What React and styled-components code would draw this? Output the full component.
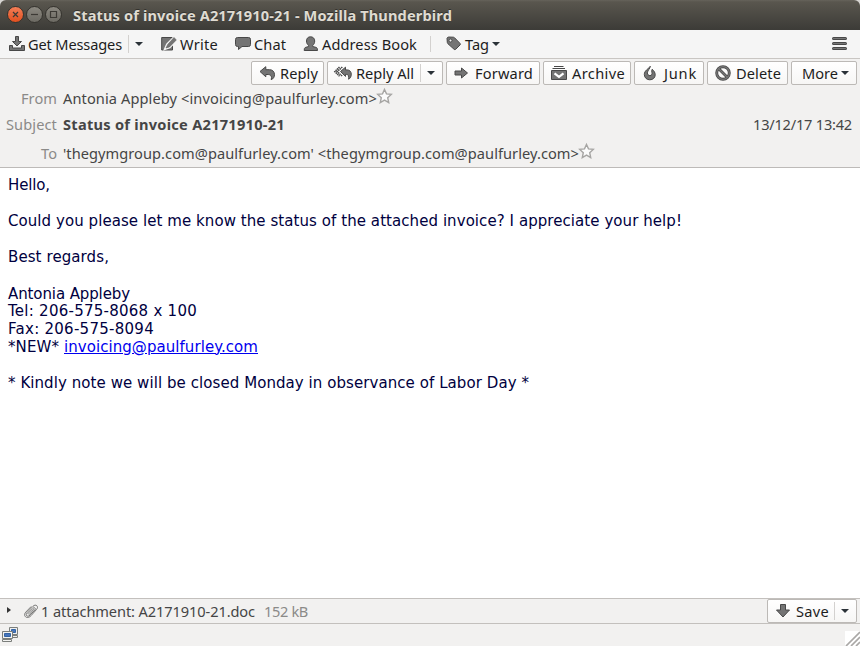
import React, { useLayoutEffect, useRef } from "react";
import styled, { createGlobalStyle, css } from "styled-components";

const GlobalStyle = createGlobalStyle`
  * { box-sizing: border-box; }
  html, body { margin: 0; padding: 0; overflow: hidden; background: #d8d6d3; }
`;

const Window = styled.div`
  width: 860px;
  height: 646px;
  display: flex;
  flex-direction: column;
  font-family: "Noto Sans", "Open Sans", sans-serif;
  font-size: 14.6px;
  line-height: 20px;
  color: #1d1d1d;
  overflow: hidden;
`;

const FittedText = styled.span`
  display: block;
  flex: none;
  width: ${(p) => p.$width}px;
  margin-left: ${(p) => p.$gap || 0}px;
  white-space: pre;
  font-weight: ${(p) => (p.$bold ? 700 : 400)};
`;

/* Spreads the letters so that the text takes up exactly the given width. */
function Text({ width, gap, bold, children, className }) {
  const ref = useRef(null);
  useLayoutEffect(() => {
    const el = ref.current;
    el.style.letterSpacing = "0px";
    const range = document.createRange();
    range.selectNodeContents(el);
    const natural = range.getBoundingClientRect().width;
    el.style.letterSpacing = `${(width - natural) / el.textContent.length}px`;
  }, [width, children]);
  return (
    <FittedText ref={ref} $width={width} $gap={gap} $bold={bold} className={className}>
      {children}
    </FittedText>
  );
}

const TitleBar = styled.header`
  height: 30px;
  flex: none;
  display: flex;
  align-items: center;
  gap: 2px;
  padding: 0 0 1px 7px;
  border-radius: 6px 6px 0 0;
  background: linear-gradient(#66635b 0, #59564e 2px, #3d3c38 29px);
  color: #dfdbd2;
  text-shadow: 0 -1px 0 #33322e;
`;

const WindowButton = styled.span`
  width: 17px;
  height: 17px;
  display: flex;
  align-items: center;
  justify-content: center;
  border-radius: 50%;
  border: 1px solid #35332e;
  background: ${(p) => (p.$close ? "linear-gradient(#f37e57, #e2501f)" : "linear-gradient(#8b8880, #6c6a63)")};
`;

const TitleText = styled(Text)`
  margin-left: 9px;
`;

const Toolbar = styled.nav`
  height: 29px;
  flex: none;
  display: flex;
  align-items: center;
  padding: 0 11px 0 9px;
  background: #f5f5f5;
  border-bottom: 1px solid #c9c6c3;
`;

const ToolItem = styled.div`
  display: flex;
  align-items: center;
  margin-left: ${(p) => p.$gap || 0}px;
`;

const Divider = styled.span`
  width: 1px;
  height: ${(p) => p.$height || 18}px;
  margin: 0 ${(p) => p.$after || 0}px 0 ${(p) => p.$before || 0}px;
  background: #d3d1cf;
`;

const Caret = styled.span`
  width: 0;
  height: 0;
  margin-left: ${(p) => p.$gap || 0}px;
  border: 4px solid transparent;
  border-top-color: #2b3238;
  border-bottom: 0;
`;

const Spacer = styled.span`
  flex: 1;
`;

const Headers = styled.section`
  height: 109px;
  flex: none;
  border-bottom: 1px solid #bdbab8;
  background: #f2f1f0;
  color: #454545;
`;

const Actions = styled.div`
  display: flex;
  justify-content: flex-end;
  gap: 3px;
  padding: 2px 3px 0 0;
`;

const Button = styled.div`
  width: ${(p) => p.$width}px;
  height: 24px;
  display: flex;
  align-items: center;
  padding-left: ${(p) => p.$inset || 7}px;
  border: 1px solid #bcb9b6;
  border-radius: 2px;
  background: linear-gradient(#ffffff, #f7f6f5);
  color: #1d1d1d;
`;

const HeaderRow = styled.div`
  display: flex;
  height: 20px;
  margin-top: ${(p) => p.$top}px;
  padding-right: 8px;
`;

const HeaderName = styled.div`
  width: 57px;
  display: flex;
  justify-content: flex-end;
  margin-right: 6px;
  color: #8b8a88;
`;

const Message = styled.main`
  flex: 1;
  padding: 8px 8px 0;
  background: #fff;
  color: #000040;
  font-family: "DejaVu Sans", sans-serif;
  font-size: 15px;
  line-height: 18px;
`;

const Paragraph = styled.div`
  margin-bottom: 18px;
  ${(p) => p.$signature && css`
    padding-top: 1.5px;
    margin-bottom: 17.500px;
    line-height: 17.7px;
  `}
`;

const Line = styled.div`
  display: flex;
`;

const MailLink = styled(Text)`
  color: #0000ee;
  text-decoration: underline;
`;

const Attachments = styled.section`
  height: 26px;
  flex: none;
  display: flex;
  align-items: center;
  padding: 0 3px 0 7px;
  border-top: 1px solid #c3c0bd;
  border-bottom: 1px solid #c3c0bd;
  background: #f2f1f0;
  color: #454545;
`;

const Expander = styled.span`
  width: 0;
  height: 0;
  margin: 0 13px 2px 0;
  border: 3px solid transparent;
  border-left: 4px solid #333;
  border-right: 0;
`;

const FileSize = styled(Text)`
  color: #8b8a88;
`;

const StatusBar = styled.footer`
  height: 22px;
  flex: none;
  display: flex;
  justify-content: space-between;
  align-items: flex-start;
  padding: 2px 0 0 2px;
  background: #f2f1f0;
`;

const Drawing = styled.svg`
  flex: none;
  display: block;
  overflow: visible;
`;

const GripDrawing = styled(Drawing)`
  margin-top: 5px;
`;

const iconPaths = {
  download: <path d="M6.5.5h3v5h3L8 10 3.500 5.500h3zM.5 9.500h3v2.500h9V9.500h3v5H.5z" />,
  write: (
    <>
      <path d="M.7 1.500h10.800v12.500H.7z" />
      <path d="M13 1.500 6.200 8.500 4.300 12.700l4.200-1.400L15.500 4.500z" stroke="#f5f5f5" strokeWidth="2.400" />
      <path d="M13 1.500 6.700 8.500 5 12l3.500-1.100L15.300 4z" stroke="#606060" strokeWidth=".6" />
    </>
  ),
  chat: <path d="M2.500 1.500h11q2 0 2 2v5q0 2-2 2H7l-3.500 3v-3h-1q-2 0-2-2v-5q0-2 2-2z" />,
  person: <path d="M7.500.8C10 .8 11.700 2.400 11.700 5c0 2-.8 3.600-2 4.300v1.200l3.800 1q1 .4 1 3H1.200q0-2.600 1-3l3.400-1V9.300C4.300 8.600 3.500 7 3.500 5 3.500 2.400 5 .8 7.500.8z" />,
  tag: (
    <>
      <path d="M1 2.200 2.200 1l5 .2q.8 0 1.300.5l5.500 5.700q.8.800 0 1.600l-4.300 4.300q-.8.800-1.600 0L2 7.800Q1.400 7.200 1.300 6.500z" />
      <circle cx="4.500" cy="4.500" r="1.500" fill="#f5f5f5" />
    </>
  ),
  reply: <path d="M1 6.500 6.800 1.700v3h3.700c3 0 5 2 5 5 0 2.300-1.200 4.200-3.300 5 .9-3.300-.1-5.200-3-5.200H6.800v2.300z" />,
  replyAll: (
    <>
      <path d="M5.500 6.500 10.500 2.200v2.700h1.600c2.500 0 4.200 1.800 4.200 4.300 0 2.200-1 4.200-2.700 5 .6-3-.3-4.800-2.200-4.800h-.9v2z" />
      <path d="M7.300 2 2.200 6.600l5.100 4.600M4.500 2-.2 6.600l4.700 4.600" fill="none" strokeWidth="1.500" strokeDasharray="1.500 .5" />
    </>
  ),
  forward: <path d="M1 6h6.500V3l6 5-6 5v-3H1z" />,
  archive: (
    <>
      <path d="M3 1.500h9.500M1.500 3.500H14" />
      <path d="M.5 5.500h15v9H.5z" />
      <path d="m3.500 8.300 4.500 3.600 4.500-3.600" fill="none" stroke="#fff" strokeWidth="2.200" />
      <path d="m4.800 7 3.200 2.700L11.200 7z" stroke="none" />
    </>
  ),
  junk: <path d="M8.300 1.300C8.300 3.400 5.500 5.300 5.400 7.800c0 1.700 1 2.800 2.500 2.800 1.700 0 2.500-1.500 2-3.300-.3-1-.2-2 .2-3 2 1.400 3.100 3.400 3.100 5.500 0 3.100-2.400 5-5.400 5s-5.500-2.100-5.500-5.300C2.300 5.600 6.200 4.100 8.300 1.300z" />,
  block: (
    <>
      <circle cx="8" cy="8" r="6.300" fill="none" strokeWidth="2.900" />
      <path d="m3.500 3.500 9 9" strokeWidth="2.800" />
      <path d="m3.500 3.500 9 9" stroke="#777" strokeWidth="1.200" />
      <circle cx="8" cy="8" r="6.300" fill="none" stroke="#777" strokeWidth="1.300" />
    </>
  ),
  save: <path d="M5.500 1.500h5v5.500h4L8 14 1.500 7h4z" />,
};

function Icon({ name }) {
  return (
    <Drawing width="16" height="16" viewBox="0 0 16 16" fill="#747474" stroke="#484848" strokeWidth="1">
      {iconPaths[name]}
    </Drawing>
  );
}

function Star() {
  return (
    <Drawing width="16" height="16" viewBox="0 0 16 16" fill="#fbfbfb" stroke="#a6a5a3" strokeWidth="1.400">
      <path d="m7.500 1.500 2 4.400 4.800.5-3.600 3.300 1 4.800-4.200-2.400-4.200 2.400 1-4.800L.7 6.400l4.800-.5z" />
    </Drawing>
  );
}

function Glyph({ children }) {
  return (
    <Drawing width="15" height="15" viewBox="0 0 15 15" fill="none" stroke="#3c3a35" strokeWidth="1.200">
      {children}
    </Drawing>
  );
}

export default function App() {
  return (
    <>
      <GlobalStyle />
      <Window>
        <TitleBar>
          <WindowButton $close><Glyph><path d="m5 5 5 5m0-5-5 5" /></Glyph></WindowButton>
          <WindowButton><Glyph><path d="M4 7.500h7" /></Glyph></WindowButton>
          <WindowButton><Glyph><path d="M4.500 4.500h6v6h-6z" /></Glyph></WindowButton>
          <TitleText bold width={379}>Status of invoice A2171910-21 - Mozilla Thunderbird</TitleText>
        </TitleBar>

        <Toolbar>
          <ToolItem>
            <Icon name="download" />
            <Text width={94} gap={3}>Get Messages</Text>
            <Divider $before={6} $after={6} />
            <Caret />
          </ToolItem>
          <ToolItem $gap={18}>
            <Icon name="write" />
            <Text width={38} gap={3}>Write</Text>
          </ToolItem>
          <ToolItem $gap={17}>
            <Icon name="chat" />
            <Text width={32} gap={3}>Chat</Text>
          </ToolItem>
          <ToolItem $gap={17}>
            <Icon name="person" />
            <Text width={95} gap={3}>Address Book</Text>
          </ToolItem>
          <Divider $before={13} $after={15} $height={16} />
          <ToolItem>
            <Icon name="tag" />
            <Text width={24} gap={3}>Tag</Text>
            <Caret $gap={3} />
          </ToolItem>
          <Spacer />
          <Drawing width="18" height="14" viewBox="0 0 18 14" stroke="#484848" strokeWidth="3" strokeLinecap="round">
            <path d="M2.500 1.500h12M2.500 6.500h12M2.500 11.500h12" />
            <path d="M2.500 1.500h12M2.500 6.500h12M2.500 11.500h12" stroke="#777" strokeWidth="1" />
          </Drawing>
        </Toolbar>

        <Headers>
          <Actions>
            <Button $width={73}><Icon name="reply" /><Text width={38} gap={5}>Reply</Text></Button>
            <Button $width={116}>
              <Icon name="replyAll" />
              <Text width={58} gap={5}>Reply All</Text>
              <Divider $before={6} $after={6} />
              <Caret />
            </Button>
            <Button $width={94}><Icon name="forward" /><Text width={58} gap={5}>Forward</Text></Button>
            <Button $width={88}><Icon name="archive" /><Text width={53} gap={5}>Archive</Text></Button>
            <Button $width={70}><Icon name="junk" /><Text width={33} gap={6}>Junk</Text></Button>
            <Button $width={81}><Icon name="block" /><Text width={45} gap={5}>Delete</Text></Button>
            <Button $width={66} $inset={10}><Text width={36}>More</Text><Caret $gap={3} /></Button>
          </Actions>
          <HeaderRow $top={3}>
            <HeaderName><Text width={36}>From</Text></HeaderName>
            <Text width={314}>{"Antonia Appleby <invoicing@paulfurley.com>"}</Text>
            <Star />
          </HeaderRow>
          <HeaderRow $top={6}>
            <HeaderName><Text width={51}>Subject</Text></HeaderName>
            <Text bold width={222}>Status of invoice A2171910-21</Text>
            <Spacer />
            <Text width={99}>13/12/17 13:42</Text>
          </HeaderRow>
          <HeaderRow $top={9}>
            <HeaderName><Text width={16}>To</Text></HeaderName>
            <Text width={516}>{"'thegymgroup.com@paulfurley.com' <thegymgroup.com@paulfurley.com>"}</Text>
            <Star />
          </HeaderRow>
        </Headers>

        <Message>
          <Paragraph><Text width={42}>Hello,</Text></Paragraph>
          <Paragraph><Text width={674}>Could you please let me know the status of the attached invoice? I appreciate your help!</Text></Paragraph>
          <Paragraph><Text width={101}>Best regards,</Text></Paragraph>
          <Paragraph $signature>
            <Text width={122}>Antonia Appleby</Text>
            <Text width={189}>Tel: 206-575-8068 x 100</Text>
            <Text width={146}>Fax: 206-575-8094</Text>
            <Line>
              <Text width={56}>{"*NEW* "}</Text>
              <MailLink width={194}>invoicing@paulfurley.com</MailLink>
            </Line>
          </Paragraph>
          <Paragraph><Text width={521}>* Kindly note we will be closed Monday in observance of Labor Day *</Text></Paragraph>
        </Message>

        <Attachments>
          <Expander />
          <Drawing width="15" height="15" viewBox="0 0 15 15" fill="none" stroke="#686866" strokeWidth=".9" strokeLinecap="round">
            <path d="M3.700 9.800 9 4.300c1.500-1.500 3.200.2 1.800 1.700L6 11.200c-2.500 2.500-5.300-.2-3-2.600L9 2.300c2.800-2.900 6.200.3 3.500 3.200L7 11.700c-3.800 4.200-8.600.2-5.300-3.500L7 2.700M5.200 10.500l4.500-5" />
          </Drawing>
          <Text width={214} gap={2}>1 attachment: A2171910-21.doc</Text>
          <FileSize width={44} gap={9}>152 kB</FileSize>
          <Spacer />
          <Button $width={90}>
            <Icon name="save" />
            <Text width={33} gap={5}>Save</Text>
            <Divider $before={5} $after={6} />
            <Caret />
          </Button>
        </Attachments>

        <StatusBar>
          <Drawing width="16" height="17" viewBox="0 0 16 17" stroke="#7b7e7b">
            <path d="M7.500 1.500h8v7h-8zM8.500 9.500h7v2h-7z" fill="#eee" />
            <path d="M9.500 3.500h4v3h-4z" fill="#4775bd" stroke="#3465a4" />
            <path d="M.5 5.500h10v7H.5zM.5 13.500h9v2h-9z" fill="#f3f3f1" />
            <path d="M2.500 7.500h6v3h-6z" fill="#4775bd" stroke="#3465a4" />
          </Drawing>
          <GripDrawing width="15" height="15" viewBox="0 0 15 15" stroke="#aaa8a6" strokeWidth="1.700">
            <path d="M0 0h15v15H0z" fill="#fff" stroke="none" />
            <path d="M1 15 15 1M6 15l9-9M11 15l4-4" />
          </GripDrawing>
        </StatusBar>
      </Window>
    </>
  );
}
